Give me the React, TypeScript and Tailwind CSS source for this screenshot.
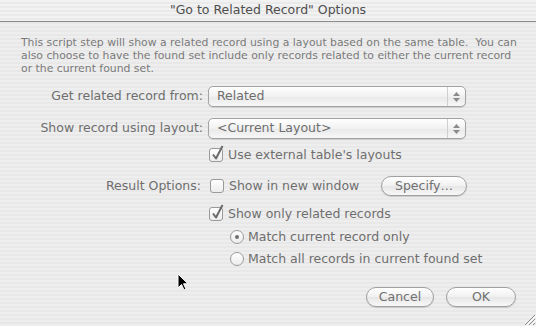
import React from "react";

const font = { fontFamily: '"DejaVu Sans", "Liberation Sans", sans-serif' };

function Popup({ value }: { value: string }) {
    return (
        <div className="flex h-[21px] w-[258px] items-stretch rounded-[5px] border border-[#a2a2a2] bg-[linear-gradient(180deg,#ffffff,#f1f1f1_50%,#e9e9e9_51%,#f7f7f7)] shadow-[0_1px_1px_rgba(0,0,0,0.12)]">
            <div className="flex flex-1 items-center pl-[8px] text-[12.5px] text-[#6e6e6e]">{value}</div>
            <div className="flex w-[18px] flex-col items-center justify-center gap-[2px] border-l border-[#cfcfcf]">
                <svg width="7" height="4" viewBox="0 0 7 4"><path d="M3.5 0 L7 4 L0 4 Z" fill="#8a8a8a" /></svg>
                <svg width="7" height="4" viewBox="0 0 7 4"><path d="M0 0 L7 0 L3.5 4 Z" fill="#8a8a8a" /></svg>
            </div>
        </div>
    );
}

function Checkbox({ checked, label }: { checked: boolean; label: string }) {
    return (
        <div className="flex h-[16px] items-center gap-[5px]">
            <div className="relative h-[14px] w-[14px] rounded-[3px] border border-[#9a9a9a] bg-[linear-gradient(180deg,#ffffff,#ececec)]">
                {checked ? (
                    <svg className="absolute left-[1px] top-[-4px]" width="13" height="16" viewBox="0 0 13 16">
                        <path d="M2 9.5 L5 13.5 L11.5 1" fill="none" stroke="#6a6a6a" strokeWidth="2" strokeLinejoin="round" />
                    </svg>
                ) : null}
            </div>
            <span className="text-[12.5px] leading-[16px] text-[#6e6e6e]">{label}</span>
        </div>
    );
}

function Radio({ checked, label }: { checked: boolean; label: string }) {
    return (
        <div className="flex h-[16px] items-center gap-[4px]">
            <div className="flex h-[14px] w-[14px] items-center justify-center rounded-full border border-[#9a9a9a] bg-[linear-gradient(180deg,#ffffff,#ececec)]">
                {checked ? <div className="h-[4px] w-[4px] rounded-full bg-[#707070]" /> : null}
            </div>
            <span className="text-[12.5px] leading-[16px] text-[#6e6e6e]">{label}</span>
        </div>
    );
}

function PillButton({ label, width }: { label: string; width: string }) {
    return (
        <div className={`flex h-[20px] items-center justify-center rounded-full border border-[#a0a0a0] bg-[linear-gradient(180deg,#ffffff,#f0f0f0_50%,#e6e6e6_51%,#f8f8f8)] text-[12.5px] text-[#707070] shadow-[0_1px_1px_rgba(0,0,0,0.15)] ${width}`}>
            {label}
        </div>
    );
}

export default function App() {
    return (
        <div style={font} className="relative flex h-[326px] w-[536px] flex-col overflow-hidden bg-[repeating-linear-gradient(180deg,#eeeeee_0px,#eeeeee_2px,#e8e8e8_2px,#e8e8e8_4px)]">
            {/* title bar */}
            <div className="flex h-[22px] shrink-0 items-center justify-center border-b border-[#8a8a8a] bg-[repeating-linear-gradient(180deg,#f2f2f2_0px,#f2f2f2_2px,#eaeaea_2px,#eaeaea_4px)] text-[12.5px] text-[#4e4e4e]">
                "Go to Related Record" Options
            </div>

            <div className="flex flex-1 flex-col pl-[21px] pr-[16px]">
                <p className="mt-[14px] whitespace-nowrap text-[10.85px] leading-[13px] text-[#7a7a7a]">
                    This script step will show a related record using a layout based on the same table.&nbsp; You can
                    <br />
                    also choose to have the found set include only records related to either the current record
                    <br />
                    or the current found set.
                </p>

                <div className="mt-[11px] grid grid-cols-[182px_1fr] items-center gap-x-[5px] gap-y-[11px]">
                    <span className="text-right text-[12.5px] text-[#6e6e6e]">Get related record from:</span>
                    <Popup value="Related" />
                    <span className="text-right text-[12.5px] text-[#6e6e6e]">Show record using layout:</span>
                    <Popup value="<Current Layout>" />
                </div>

                <div className="ml-[188px] mt-[8px]">
                    <Checkbox checked label="Use external table's layouts" />
                </div>

                <div className="mt-[13px] flex items-center">
                    <span className="w-[180px] text-right text-[12.5px] text-[#6e6e6e]">Result Options:</span>
                    <div className="ml-[9px] w-[171px]">
                        <Checkbox checked={false} label="Show in new window" />
                    </div>
                    <PillButton label="Specify…" width="w-[86px]" />
                </div>

                <div className="ml-[188px] mt-[10px]">
                    <Checkbox checked label="Show only related records" />
                </div>
                <div className="ml-[209px] mt-[7px] flex flex-col gap-[6px]">
                    <Radio checked label="Match current record only" />
                    <Radio checked={false} label="Match all records in current found set" />
                </div>

                <div className="mt-[20px] flex justify-end gap-[12px] pr-[4px]">
                    <PillButton label="Cancel" width="w-[68px]" />
                    <PillButton label="OK" width="w-[70px]" />
                </div>
            </div>

            {/* resize grip */}
            <svg className="absolute bottom-0 right-0" width="14" height="14" viewBox="0 0 14 14">
                <path d="M13 3 L3 13 M13 7 L7 13 M13 11 L11 13" stroke="#8c8c8c" strokeWidth="1" />
                <path d="M14 4 L4 14 M14 8 L8 14" stroke="#ffffff" strokeWidth="1" />
            </svg>

            {/* mouse pointer */}
            <svg className="absolute left-[177px] top-[273px]" width="12" height="19" viewBox="0 0 12 19">
                <path d="M1 1 L1 15 L4.5 11.5 L7 17 L9 16 L6.5 10.8 L11 10.8 Z" fill="#000000" stroke="#ffffff" strokeWidth="1" strokeLinejoin="round" />
            </svg>
        </div>
    );
}
